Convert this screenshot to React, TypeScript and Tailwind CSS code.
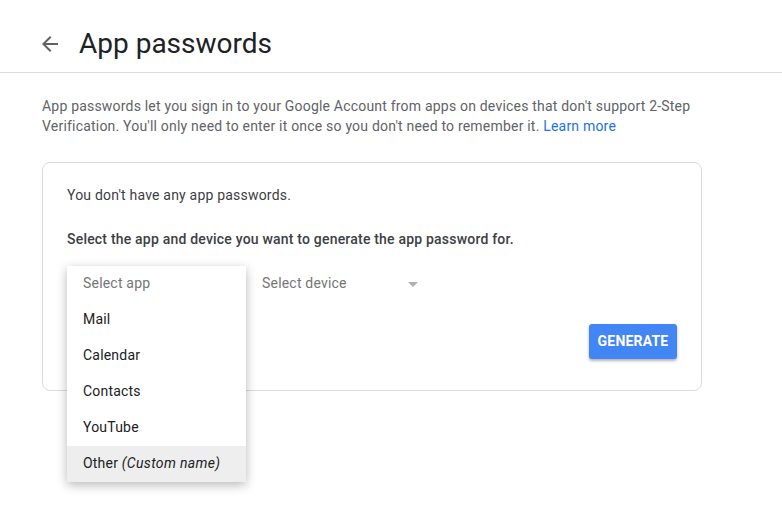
import React from "react";

export default function App() {
  const items = ["Mail", "Calendar", "Contacts", "YouTube"];
  return (
    <div
      className="w-[782px] h-[519px] bg-white overflow-hidden tracking-[0.2px]"
      style={{ fontFamily: "Roboto, 'Liberation Sans', sans-serif" }}
    >
      <header className="h-[73px] border-b border-[#dadce0] flex items-center pl-[38px] pt-[16px]">
        <svg width="24" height="24" viewBox="0 0 24 24" className="shrink-0">
          <path
            d="M20 11H7.83l5.59-5.59L12 4l-8 8 8 8 1.41-1.41L7.83 13H20v-2z"
            fill="#5f6368"
          />
        </svg>
        <h1 className="ml-[17px] text-[28px] leading-[36px] text-[#202124] font-normal tracking-normal">
          App passwords
        </h1>
      </header>

      <div className="pl-[42px] w-[702px]">
        <p className="mt-[23px] text-[14px] leading-[20px] text-[#5f6368]">
          App passwords let you sign in to your Google Account from apps on devices that don&apos;t support 2-Step
          <br />
          Verification. You&apos;ll only need to enter it once so you don&apos;t need to remember it.{" "}
          <span className="text-[#1a73e8]">Learn more</span>
        </p>

        <div className="mt-[26px] h-[229px] border border-[#dadce0] rounded-lg pt-[22px] px-[24px]">
          <p className="text-[14px] leading-[20px] text-[#3c4043]">
            You don&apos;t have any app passwords.
          </p>
          <p className="mt-[24px] text-[14px] leading-[20px] text-[#3c4043] font-medium">
            Select the app and device you want to generate the app password for.
          </p>

          <div className="relative mt-[17px] flex h-[36px] items-center">
            <div className="w-[179px] pl-[16px] pb-[2px] text-[14px] text-[#757575]">Select app</div>
            <div className="flex w-[180px] items-center justify-between pl-[16px] pr-[8px]">
              <span className="text-[14px] text-[#757575] pb-[2px]">Select device</span>
              <svg width="10" height="5" viewBox="0 0 10 5">
                <path d="M0 0h10L5 5z" fill="#b0b0b0" />
              </svg>
            </div>

            <div className="absolute left-0 top-0 w-[179px] bg-white shadow-[0_3px_10px_rgba(0,0,0,0.28)] z-10">
              <div className="h-[36px] flex items-center pl-[16px] pb-[2px] text-[14px] text-[#757575]">
                Select app
              </div>
              {items.map((it) => (
                <div
                  key={it}
                  className="h-[36px] flex items-center pl-[16px] pb-[2px] text-[14px] text-[#202124]"
                >
                  {it}
                </div>
              ))}
              <div className="h-[36px] flex items-center pl-[16px] pb-[2px] text-[14px] text-[#202124] bg-[#eeeeee]">
                Other&nbsp;<i className="tracking-[0.35px]">(Custom name)</i>
              </div>
            </div>
          </div>

          <div className="mt-[22px] flex justify-end">
            <button className="w-[88px] h-[35px] rounded-[3px] bg-[#4285f4] text-white text-[14px] font-bold tracking-[0.2px] shadow-[0_2px_3px_rgba(0,0,0,0.3)]">
              GENERATE
            </button>
          </div>
        </div>
      </div>
    </div>
  );
}
